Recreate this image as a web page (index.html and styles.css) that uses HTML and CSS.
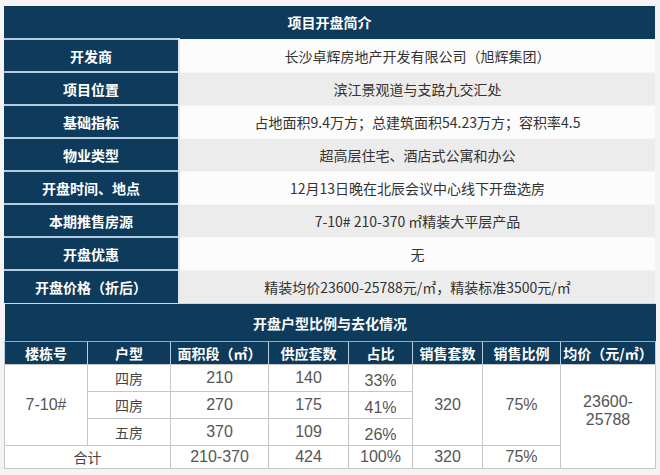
FILE: index.html
```html
<!DOCTYPE html>
<html lang="zh">
<head>
<meta charset="utf-8">
<link rel="stylesheet" href="styles.css">
</head>
<body>
<div class="wrap">
  <table class="info">
    <colgroup><col class="c-label"><col class="c-value"></colgroup>
    <tr class="r-head"><th colspan="2" class="title">项目开盘简介</th></tr>
    <tr><th>开发商</th><td>长沙卓辉房地产开发有限公司（旭辉集团）</td></tr>
    <tr class="alt"><th>项目位置</th><td>滨江景观道与支路九交汇处</td></tr>
    <tr><th>基础指标</th><td>占地面积9.4万方；总建筑面积54.23万方；容积率4.5</td></tr>
    <tr class="alt"><th>物业类型</th><td>超高层住宅、酒店式公寓和办公</td></tr>
    <tr><th>开盘时间、地点</th><td>12月13日晚在北辰会议中心线下开盘选房</td></tr>
    <tr class="alt"><th>本期推售房源</th><td>7-10# 210-370 ㎡精装大平层产品</td></tr>
    <tr><th>开盘优惠</th><td>无</td></tr>
    <tr class="alt"><th>开盘价格（折后）</th><td>精装均价23600-25788元/㎡，精装标准3500元/㎡</td></tr>
  </table>
  <table class="sales">
    <colgroup>
      <col style="width:83px"><col style="width:83px"><col style="width:98px"><col style="width:80px">
      <col style="width:64px"><col style="width:70px"><col style="width:78px"><col style="width:95px">
    </colgroup>
    <tr class="r-sec"><th colspan="8" class="title">开盘户型比例与去化情况</th></tr>
    <tr class="r-cols">
      <th>楼栋号</th><th>户型</th><th>面积段（㎡）</th><th>供应套数</th><th>占比</th><th>销售套数</th><th>销售比例</th><th>均价（元/㎡）</th>
    </tr>
    <tr class="r-data">
      <td rowspan="3" class="num">7-10#</td><td>四房</td><td class="num">210</td><td class="num">140</td><td class="num pct">33%</td>
      <td rowspan="3" class="num">320</td><td rowspan="3" class="num">75%</td><td rowspan="4" class="num price">23600-<br>25788</td>
    </tr>
    <tr class="r-data"><td>四房</td><td class="num">270</td><td class="num">175</td><td class="num pct">41%</td></tr>
    <tr class="r-data"><td>五房</td><td class="num">370</td><td class="num">109</td><td class="num pct">26%</td></tr>
    <tr class="r-sum"><td colspan="2">合计</td><td class="num">210-370</td><td class="num">424</td><td class="num">100%</td><td class="num">320</td><td class="num">75%</td></tr>
  </table>
</div>
</body>
</html>
```

FILE: styles.css
```css
html, body {
  margin: 0;
  padding: 0;
}
body {
  background: #f4f4f4;
  font-family: "Noto Sans CJK SC", "Noto Sans", sans-serif;
  color: #333;
}
.wrap {
  padding: 6px 0 0 4px;
  width: 651px;
}
table {
  border-collapse: collapse;
  table-layout: fixed;
  width: 651px;
}
th, td {
  padding: 0;
  text-align: center;
  vertical-align: middle;
  font-size: 14px;
  line-height: 18px;
}
th {
  background: #0e3b5b;
  color: #fff;
  font-weight: bold;
}
.c-label { width: 175px; }
.c-value { width: 476px; }

.info th {
  border-top: 2px solid #b4cde0;
  border-right: 2px solid #dce8f1;
}
.info .r-head th {
  border-top: 0;
  border-right: 0;
  height: 32px;
}
.info .r-head .title { padding-left: 0; }
.info tr { height: 33px; }
.info .r-head { height: 32px; }
.info td {
  background: #fcfcfc;
  border-top: 1px solid #f4f4f4;
}
.info tr.alt td { background: #ececec; }

.sales .r-sec th {
  height: 37px;
  border-top: 1px solid #c8d8e4;
  border-bottom: 1px solid #8fb0c8;
}
.sales .r-cols th {
  height: 22px;
  border-left: 1px solid #b9cfe0;
  border-right: 1px solid #b9cfe0;
  font-size: 14px;
}
.sales td {
  background: #fff;
  border: 1px solid #c6c6c6;
  color: #444;
}
.sales .r-data { height: 27px; }
.sales .r-sum { height: 23px; }
.sales .num {
  font-family: "Liberation Sans", "Noto Sans CJK SC", sans-serif;
  font-size: 16px;
  color: #555;
}
.sales .pct {
  vertical-align: bottom;
  padding-bottom: 1px;
}
.sales .price {
  line-height: 18px;
  vertical-align: middle;
  padding-bottom: 12px;
}
```
